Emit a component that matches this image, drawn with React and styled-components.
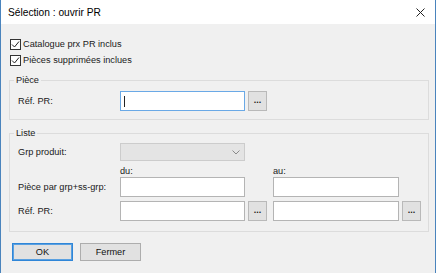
import styled, { createGlobalStyle } from 'styled-components';

const Global = createGlobalStyle`
  body {
    margin: 0;
    background: #ffffff;
    font-family: "Liberation Sans", Arial, sans-serif;
    color: #1a1a1a;
  }
`;

const Window = styled.div`
  width: 436px;
  height: 273px;
  box-sizing: border-box;
  border-left: 1px solid #4a84bd;
  border-right: 1px solid #4a84bd;
  background: #f0f0f0;
  display: flex;
  flex-direction: column;
  overflow: hidden;
`;

const TitleBar = styled.div`
  height: 24px;
  flex: none;
  background: #ffffff;
  display: flex;
  align-items: center;
  justify-content: space-between;
  padding: 0 10px 0 7px;
  font-size: 10.2px;
  color: #000;
`;

const CloseBtn = styled.svg`
  width: 9px;
  height: 9px;
  display: block;
`;

const Body = styled.div`
  padding: 12px 6px 0 8px;
  font-size: 9.2px;
`;

const CheckList = styled.div`
  padding-left: 1px;
  display: flex;
  flex-direction: column;
`;

const CheckRow = styled.label`
  height: 16px;
  display: flex;
  align-items: center;
  gap: 2px;
`;

const Box = styled.span`
  width: 11px;
  height: 11px;
  box-sizing: border-box;
  border: 1px solid #333;
  background: #fff;
  display: flex;
  align-items: center;
  justify-content: center;
`;

const GroupBox = styled.div`
  margin-top: ${p => p.$top}px;
  width: 420px;
  box-sizing: border-box;
  border: 1px solid #dcdcdc;
  padding: 0 8px ${p => p.$bottom}px 8px;
`;

const Legend = styled.div`
  width: fit-content;
  margin: -6px 0 0 -4px;
  padding: 0 2px;
  line-height: 11px;
  background: #f0f0f0;
`;

const Row = styled.div`
  margin-top: 5px;
  display: flex;
  align-items: center;
`;

const Label = styled.span`
  width: 102px;
  flex: none;
`;

const Input = styled.div`
  width: ${p => p.$w || 125}px;
  height: 20px;
  box-sizing: border-box;
  background: #fff;
  border: 1px solid ${p => (p.$focus ? '#6aa9e6' : '#b4b4b4')};
  display: flex;
  align-items: center;
  padding-left: 3px;
`;

const Caret = styled.span`
  width: 1px;
  height: 11px;
  background: #222;
`;

const Browse = styled.button`
  width: 19px;
  height: 20px;
  margin-left: 3px;
  padding: 0 0 5px;
  box-sizing: border-box;
  background: #e1e1e1;
  border: 1px solid #b9b9b9;
  font-family: inherit;
  font-size: 9px;
  font-weight: bold;
  line-height: 1;
  color: #222;
  display: flex;
  align-items: flex-end;
  justify-content: center;
`;

const ListGrid = styled.div`
  margin-top: 4px;
  display: grid;
  grid-template-columns: 102px 125px 28px 126px 22px;
  grid-template-rows: 18px 16px 20px 4px 20px;
  align-items: center;
`;

const Combo = styled.div`
  width: 125px;
  height: 18px;
  box-sizing: border-box;
  background: #e4e4e4;
  border: 1px solid #cccccc;
  display: flex;
  align-items: center;
  justify-content: flex-end;
  padding-right: 4px;
`;

const Cell = styled.div`
  grid-column: ${p => p.$col};
  grid-row: ${p => p.$row};
  padding-top: ${p => p.$pt || 0}px;
`;

const Footer = styled.div`
  margin-top: 11px;
  padding-left: 3px;
  display: flex;
  gap: 7px;
`;

const DlgButton = styled.button`
  width: 61px;
  height: 18px;
  box-sizing: border-box;
  background: #e1e1e1;
  border: 1px solid ${p => (p.$default ? '#2f86d8' : '#adadad')};
  box-shadow: ${p => (p.$default ? 'inset 0 0 0 1px #5aa0e0' : 'none')};
  font-family: inherit;
  font-size: 9.2px;
  color: #111;
  padding: 0;
`;

const Check = () => (
  <Box>
    <svg width="9" height="9" viewBox="0 0 9 9">
      <path d="M1 4.5 L3.5 7 L8 1.5" fill="none" stroke="#222" strokeWidth="1" />
    </svg>
  </Box>
);

const Chevron = () => (
  <svg width="8" height="5" viewBox="0 0 8 5">
    <path d="M0.5 0.5 L4 4 L7.5 0.5" fill="none" stroke="#8a8a8a" strokeWidth="1" />
  </svg>
);

export default function App() {
  return (
    <>
      <Global />
      <Window>
        <TitleBar>
          <span>Sélection : ouvrir PR</span>
          <CloseBtn viewBox="0 0 9 9">
            <path d="M0.5 0.5 L8.5 8.5 M8.5 0.5 L0.5 8.5" stroke="#222" strokeWidth="1" />
          </CloseBtn>
        </TitleBar>
        <Body>
          <CheckList>
            <CheckRow><Check />Catalogue prx PR inclus</CheckRow>
            <CheckRow><Check />Pièces supprimées inclues</CheckRow>
          </CheckList>

          <GroupBox $top={12} $bottom={8}>
            <Legend>Pièce</Legend>
            <Row>
              <Label>Réf. PR:</Label>
              <Input $focus><Caret /></Input>
              <Browse>...</Browse>
            </Row>
          </GroupBox>

          <GroupBox $top={13} $bottom={10}>
            <Legend>Liste</Legend>
            <ListGrid>
              <Cell $col={1} $row={1}>Grp produit:</Cell>
              <Cell $col={2} $row={1}><Combo><Chevron /></Combo></Cell>

              <Cell $col={2} $row={2} $pt={3}>du:</Cell>
              <Cell $col={4} $row={2} $pt={3}>au:</Cell>

              <Cell $col={1} $row={3}>Pièce par grp+ss-grp:</Cell>
              <Cell $col={2} $row={3}><Input /></Cell>
              <Cell $col={4} $row={3}><Input $w={126} /></Cell>

              <Cell $col={1} $row={5}>Réf. PR:</Cell>
              <Cell $col={2} $row={5}><Input /></Cell>
              <Cell $col={3} $row={5}><Browse>...</Browse></Cell>
              <Cell $col={4} $row={5}><Input $w={126} /></Cell>
              <Cell $col={5} $row={5}><Browse>...</Browse></Cell>
            </ListGrid>
          </GroupBox>

          <Footer>
            <DlgButton $default>OK</DlgButton>
            <DlgButton>Fermer</DlgButton>
          </Footer>
        </Body>
      </Window>
    </>
  );
}
